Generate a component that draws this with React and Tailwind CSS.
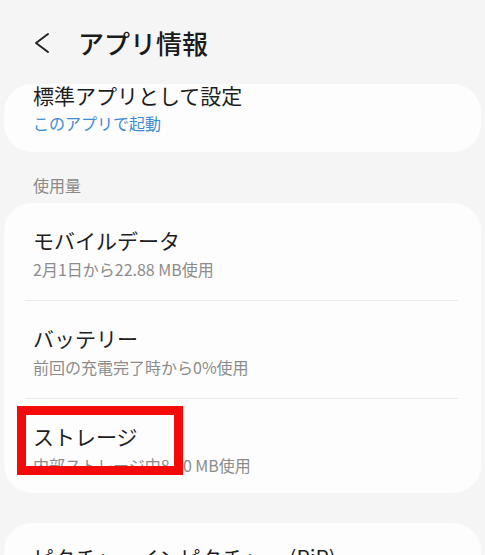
const font = {
  fontFamily: '"Noto Sans CJK JP", "Noto Sans", sans-serif',
};

function Row({ title, sub, last }) {
  return (
    <div className={`px-[29px] pt-[23px] ${last ? "pb-[17px]" : "pb-[20px]"}`}>
      <div className="text-[21px] leading-[28px] text-[#1e1e1e]">{title}</div>
      <div className="mt-[4px] text-[16px] leading-[22px] text-[#8c8c8c]">{sub}</div>
    </div>
  );
}

function Divider() {
  return <div className="ml-[21px] mr-[23px] h-px bg-[#ebebeb]" />;
}

export default function App() {
  return (
    <div className="relative h-[555px] w-full overflow-hidden bg-[#f5f5f5]" style={font}>
      <header className="flex h-[84px] items-center pt-[2px] pl-[33px]">
        <svg width="18" height="22" viewBox="0 0 18 22" className="text-[#222]">
          <polyline
            points="15,2 3,11 15,20"
            fill="none"
            stroke="currentColor"
            strokeWidth="2"
            strokeLinecap="round"
            strokeLinejoin="round"
          />
        </svg>
        <h1 className="ml-[27px] text-[26px] font-medium leading-[32px] text-[#1b1b1b]">
          アプリ情報
        </h1>
      </header>

      <div className="mx-[4px] rounded-[28px] bg-[#fdfdfd] px-[29px] pb-[18px]">
        <div className="text-[21px] leading-[22px] text-[#1e1e1e]">標準アプリとして設定</div>
        <div className="mt-[6px] text-[16px] leading-[22px] text-[#3d8bd4]">このアプリで起動</div>
      </div>

      <div className="px-[33px] pt-[22px] pb-[7px] text-[16px] leading-[22px] text-[#8a8a8a]">
        使用量
      </div>

      <div className="mx-[4px] rounded-[28px] bg-[#fdfdfd]">
        <Row title="モバイルデータ" sub="2月1日から22.88 MB使用" />
        <Divider />
        <Row title="バッテリー" sub="前回の充電完了時から0%使用" />
        <Divider />
        <Row title="ストレージ" sub="内部ストレージ中8.80 MB使用" last />
      </div>

      <div className="mx-[4px] mt-[30px] rounded-[28px] bg-[#fdfdfd] px-[29px] pt-[20px] pb-[20px]">
        <div className="text-[21px] leading-[28px] text-[#1e1e1e]">
          ピクチャーインピクチャー (PiP)
        </div>
      </div>

      <div className="absolute left-[17px] top-[406px] h-[69px] w-[166px] border-[9px] border-[#f50a0a]" />
    </div>
  );
}
